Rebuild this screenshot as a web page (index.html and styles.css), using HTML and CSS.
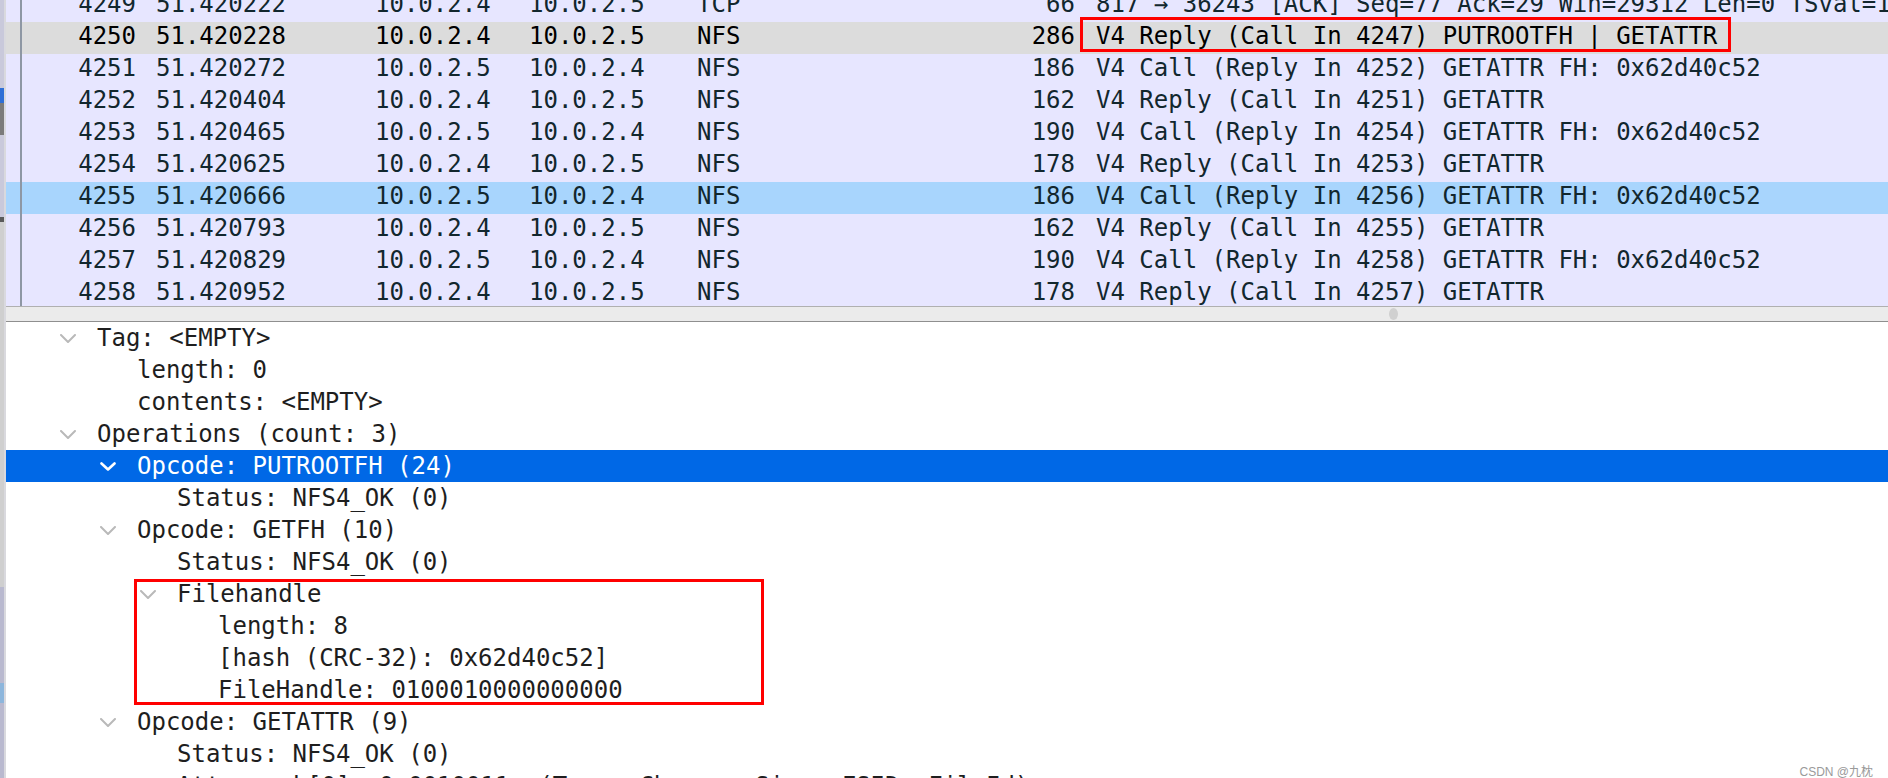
FILE: index.html
```html
<!DOCTYPE html>
<html>
<head>
<meta charset="utf-8">
<title>Wireshark NFS</title>
<link rel="stylesheet" href="styles.css">
</head>
<body>
<div class="app">
  <div class="edge">
    <span class="seg seg-a"></span>
    <span class="seg seg-blue"></span>
    <span class="seg seg-dark"></span>
    <span class="seg seg-b"></span>
    <span class="seg seg-mark"></span>
    <span class="seg seg-grey"></span>
    <span class="seg seg-c"></span>
    <span class="seg seg-lblue"></span>
    <span class="seg seg-d"></span>
  </div>
  <div class="main">
    <div class="packets">
      <div class="rows">
        <div class="row">
          <span class="c-no">4249</span><span class="c-time">51.420222</span><span class="c-src">10.0.2.4</span><span class="c-dst">10.0.2.5</span><span class="c-proto">TCP</span><span class="c-len">66</span><span class="c-info">817 → 36243 [ACK] Seq=77 Ack=29 Win=29312 Len=0 TSval=1064213 TSecr=1064213</span>
        </div>
        <div class="row row-marked">
          <span class="c-no">4250</span><span class="c-time">51.420228</span><span class="c-src">10.0.2.4</span><span class="c-dst">10.0.2.5</span><span class="c-proto">NFS</span><span class="c-len">286</span><span class="c-info boxed">V4 Reply (Call In 4247) PUTROOTFH | GETATTR</span>
        </div>
        <div class="row">
          <span class="c-no">4251</span><span class="c-time">51.420272</span><span class="c-src">10.0.2.5</span><span class="c-dst">10.0.2.4</span><span class="c-proto">NFS</span><span class="c-len">186</span><span class="c-info">V4 Call (Reply In 4252) GETATTR FH: 0x62d40c52</span>
        </div>
        <div class="row">
          <span class="c-no">4252</span><span class="c-time">51.420404</span><span class="c-src">10.0.2.4</span><span class="c-dst">10.0.2.5</span><span class="c-proto">NFS</span><span class="c-len">162</span><span class="c-info">V4 Reply (Call In 4251) GETATTR</span>
        </div>
        <div class="row">
          <span class="c-no">4253</span><span class="c-time">51.420465</span><span class="c-src">10.0.2.5</span><span class="c-dst">10.0.2.4</span><span class="c-proto">NFS</span><span class="c-len">190</span><span class="c-info">V4 Call (Reply In 4254) GETATTR FH: 0x62d40c52</span>
        </div>
        <div class="row">
          <span class="c-no">4254</span><span class="c-time">51.420625</span><span class="c-src">10.0.2.4</span><span class="c-dst">10.0.2.5</span><span class="c-proto">NFS</span><span class="c-len">178</span><span class="c-info">V4 Reply (Call In 4253) GETATTR</span>
        </div>
        <div class="row row-selected">
          <span class="c-no">4255</span><span class="c-time">51.420666</span><span class="c-src">10.0.2.5</span><span class="c-dst">10.0.2.4</span><span class="c-proto">NFS</span><span class="c-len">186</span><span class="c-info">V4 Call (Reply In 4256) GETATTR FH: 0x62d40c52</span>
        </div>
        <div class="row">
          <span class="c-no">4256</span><span class="c-time">51.420793</span><span class="c-src">10.0.2.4</span><span class="c-dst">10.0.2.5</span><span class="c-proto">NFS</span><span class="c-len">162</span><span class="c-info">V4 Reply (Call In 4255) GETATTR</span>
        </div>
        <div class="row">
          <span class="c-no">4257</span><span class="c-time">51.420829</span><span class="c-src">10.0.2.5</span><span class="c-dst">10.0.2.4</span><span class="c-proto">NFS</span><span class="c-len">190</span><span class="c-info">V4 Call (Reply In 4258) GETATTR FH: 0x62d40c52</span>
        </div>
        <div class="row">
          <span class="c-no">4258</span><span class="c-time">51.420952</span><span class="c-src">10.0.2.4</span><span class="c-dst">10.0.2.5</span><span class="c-proto">NFS</span><span class="c-len">178</span><span class="c-info">V4 Reply (Call In 4257) GETATTR</span>
        </div>
      </div>
    </div>

    <div class="splitter"><span class="grip"></span></div>

    <div class="tree">
      <div class="node lvl0"><span class="chev"><svg width="16" height="9" viewBox="0 0 16 9"><polyline points="1,1 8,8 15,1"/></svg></span><span class="label">Tag: &lt;EMPTY&gt;</span></div>
      <div class="node lvl1"><span class="chev"></span><span class="label">length: 0</span></div>
      <div class="node lvl1"><span class="chev"></span><span class="label">contents: &lt;EMPTY&gt;</span></div>
      <div class="node lvl0"><span class="chev"><svg width="16" height="9" viewBox="0 0 16 9"><polyline points="1,1 8,8 15,1"/></svg></span><span class="label">Operations (count: 3)</span></div>
      <div class="node lvl1 node-selected"><span class="chev"><svg width="16" height="9" viewBox="0 0 16 9"><polyline points="1.5,1.5 8,7.5 14.5,1.5"/></svg></span><span class="label">Opcode: PUTROOTFH (24)</span></div>
      <div class="node lvl2"><span class="chev"></span><span class="label">Status: NFS4_OK (0)</span></div>
      <div class="node lvl1"><span class="chev"><svg width="16" height="9" viewBox="0 0 16 9"><polyline points="1,1 8,8 15,1"/></svg></span><span class="label">Opcode: GETFH (10)</span></div>
      <div class="node lvl2"><span class="chev"></span><span class="label">Status: NFS4_OK (0)</span></div>
      <div class="group-boxed">
        <div class="node lvl2"><span class="chev"><svg width="16" height="9" viewBox="0 0 16 9"><polyline points="1,1 8,8 15,1"/></svg></span><span class="label">Filehandle</span></div>
        <div class="node lvl3"><span class="chev"></span><span class="label">length: 8</span></div>
        <div class="node lvl3"><span class="chev"></span><span class="label">[hash (CRC-32): 0x62d40c52]</span></div>
        <div class="node lvl3"><span class="chev"></span><span class="label">FileHandle: 0100010000000000</span></div>
      </div>
      <div class="node lvl1"><span class="chev"><svg width="16" height="9" viewBox="0 0 16 9"><polyline points="1,1 8,8 15,1"/></svg></span><span class="label">Opcode: GETATTR (9)</span></div>
      <div class="node lvl2"><span class="chev"></span><span class="label">Status: NFS4_OK (0)</span></div>
      <div class="node lvl2"><span class="chev"><svg width="9" height="16" viewBox="0 0 9 16"><polyline points="1,1 8,8 1,15"/></svg></span><span class="label">Attr mask[0]: 0x0010011a (Type, Change, Size, FSID, FileId)</span></div>
    </div>
  </div>
</div>
<div class="watermark">CSDN @九枕</div>
</body>
</html>
```

FILE: styles.css
```css
html, body {
  margin: 0;
  padding: 0;
}

body {
  width: 1888px;
  height: 778px;
  overflow: hidden;
  position: relative;
  background: #ffffff;
  font-family: "DejaVu Sans Mono", "Liberation Mono", monospace;
}

.app {
  display: flex;
  height: 778px;
}

/* Sliver of the window behind, on the far left */
.edge {
  width: 4px;
  flex: 0 0 4px;
  display: flex;
  flex-direction: column;
  border-right: 2px solid #d9d9de;
}

.seg { display: block; width: 100%; }
.seg-a { height: 88px; background: #c9c9db; }
.seg-blue { height: 15px; background: #2f6fd6; }
.seg-dark { height: 32px; background: #7b7b7b; }
.seg-b { height: 82px; background: #c9c9db; }
.seg-mark { height: 5px; background: #5a5a5a; }
.seg-grey { height: 365px; background: #cfcfcf; }
.seg-c { height: 96px; background: #b9b9cf; }
.seg-lblue { height: 20px; background: #8db6dc; }
.seg-d { flex: 1; background: #b9b9cf; }

.main {
  flex: 1;
  display: flex;
  flex-direction: column;
  min-width: 0;
}

/* ---------- Packet list ---------- */
.packets {
  height: 306px;
  flex: 0 0 306px;
  overflow: hidden;
  position: relative;
  background: #e7e6ff;
}

.packets::before {
  content: "";
  position: absolute;
  left: 14px;
  top: 0;
  bottom: 0;
  width: 2px;
  background: #8e97a4;
  z-index: 2;
}

.rows {
  margin-top: -10px;
}

.row {
  display: grid;
  grid-template-columns: 140px 219px 154px 168px 213px 185px 1fr;
  height: 32px;
  line-height: 28px;
  font-size: 24px;
  color: #12272e;
  white-space: nowrap;
  background: #e7e6ff;
}

.row > span {
  overflow: visible;
}

.row-marked {
  background: #dcdcdc;
  color: #000000;
}

.row-selected {
  background: #a8d5fd;
}

.c-no { text-align: right; padding-right: 10px; }
.c-time, .c-src, .c-dst, .c-proto { padding-left: 10px; }
.c-len { text-align: right; padding-right: 10px; }
.c-info { padding-left: 11px; overflow: hidden; }

.boxed {
  position: relative;
  overflow: visible;
}

.boxed::after {
  content: "";
  position: absolute;
  left: -5px;
  top: -5px;
  width: 651px;
  height: 35px;
  box-sizing: border-box;
  border: 3px solid #ff0000;
}

/* ---------- Splitter ---------- */
.splitter {
  height: 16px;
  flex: 0 0 16px;
  box-sizing: border-box;
  border-top: 1px solid #b0b0b0;
  border-bottom: 1px solid #8f8f8f;
  background: #ebebeb;
  display: flex;
  align-items: center;
  padding-left: 1383px;
}

.grip {
  width: 9px;
  height: 12px;
  border-radius: 50%;
  background: #d0d0d0;
}

/* ---------- Detail tree ---------- */
.tree {
  flex: 1;
  overflow: hidden;
  background: #ffffff;
}

.node {
  display: flex;
  align-items: center;
  height: 32px;
  line-height: 32px;
  font-size: 24px;
  color: #1e1e1e;
  white-space: nowrap;
}

.lvl0 { padding-left: 54px; }
.lvl1 { padding-left: 94px; }
.lvl2 { padding-left: 134px; }
.lvl3 { padding-left: 175px; }

.chev {
  width: 37px;
  flex: 0 0 37px;
  display: flex;
  align-items: center;
  color: #b9b9b9;
}

.chev svg {
  display: block;
  fill: none;
  stroke: currentColor;
  stroke-width: 2;
  stroke-linecap: round;
  stroke-linejoin: round;
}

.node-selected {
  background: #0068e6;
  color: #ffffff;
}

.node-selected .chev {
  color: #ffffff;
}

.node-selected .chev svg {
  stroke-width: 2.6;
}

.group-boxed {
  position: relative;
}

.group-boxed::after {
  content: "";
  position: absolute;
  left: 128px;
  top: 1px;
  width: 630px;
  height: 126px;
  box-sizing: border-box;
  border: 3px solid #ff0000;
}

/* ---------- Watermark ---------- */
.watermark {
  position: absolute;
  right: 15px;
  bottom: -1px;
  font-family: "Liberation Sans", "Noto Sans CJK SC", sans-serif;
  font-size: 12px;
  line-height: 14px;
  color: #9a9a9a;
}
```
